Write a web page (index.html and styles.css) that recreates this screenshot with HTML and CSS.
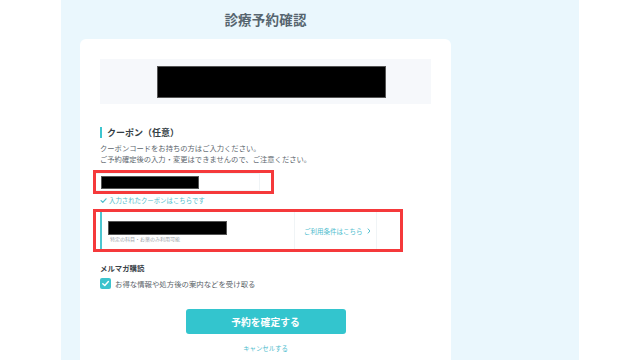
FILE: index.html
```html
<!DOCTYPE html>
<html lang="ja">
<head>
<meta charset="utf-8">
<link rel="stylesheet" href="styles.css">
</head>
<body>
<div class="panel">
  <div class="card-col">
    <h1 class="title">診療予約確認</h1>
    <div class="card">
      <div class="summary"><div class="redact redact-summary"></div></div>

      <div class="section-head">クーポン（任意）</div>
      <p class="desc">クーポンコードをお持ちの方はご入力ください。<br>ご予約確定後の入力・変更はできませんので、ご注意ください。</p>

      <div class="mark mark-input">
        <div class="input"><div class="redact redact-code"></div></div>
      </div>
      <div class="applied"><svg class="tick" viewBox="0 0 10 10"><path d="M1.5 5.2 L4 7.6 L8.6 2.6" fill="none" stroke="currentColor" stroke-width="1.8" stroke-linecap="round" stroke-linejoin="round"/></svg>入力されたクーポンはこちらです</div>

      <div class="mark mark-coupon">
        <div class="coupon">
          <div class="coupon-main">
            <div class="redact redact-coupon"></div>
            <div class="coupon-note">特定の科目・お薬のみ利用可能</div>
          </div>
          <div class="coupon-link">ご利用条件はこちら<svg class="chev" viewBox="0 0 6 10"><path d="M1.5 1.5 L4.5 5 L1.5 8.5" fill="none" stroke="currentColor" stroke-width="1.6" stroke-linecap="round" stroke-linejoin="round"/></svg></div>
        </div>
      </div>

      <div class="mail-head">メルマガ購読</div>
      <label class="check-row"><span class="checkbox"><svg viewBox="0 0 10 10"><path d="M2 5.2 L4.2 7.3 L8.2 2.8" fill="none" stroke="#fff" stroke-width="1.6" stroke-linecap="round" stroke-linejoin="round"/></svg></span>お得な情報や処方後の案内などを受け取る</label>

      <button class="confirm">予約を確定する</button>
      <div class="cancel">キャンセルする</div>
    </div>
  </div>
</div>
</body>
</html>
```
FILE: styles.css
```css
* { box-sizing: border-box; }
html, body { margin: 0; padding: 0; background: #ffffff; }
body {
  width: 640px; height: 360px; overflow: hidden;
  font-family: "Noto Sans CJK JP", "Noto Sans", sans-serif;
}
.panel {
  margin-left: 61px;
  width: 518px;
  height: 360px;
  background: #eaf7fd;
  padding-left: 19px;
}
.card-col { width: 371px; }
.title {
  margin: 0;
  height: 39px;
  line-height: 39px;
  text-align: center;
  font-size: 13.5px;
  font-weight: 700;
  color: #56656f;
  letter-spacing: 0.2px;
}
.card {
  background: #ffffff;
  border-radius: 6px 6px 0 0;
  padding: 20px 20px 0 20px;
  height: 321px;
}
.summary {
  height: 45px;
  background: #f6f8fb;
  padding: 7px 0 0 57px;
}
.redact { background: #000; border: 1px solid #555; }
.redact-summary { width: 229px; height: 32px; }
.section-head {
  margin-top: 23px;
  height: 11px;
  line-height: 11px;
  border-left: 2px solid #3ec5cf;
  padding-left: 5px;
  font-size: 9px;
  font-weight: 700;
  color: #333d44;
}
.desc {
  margin: 5px 0 0 0;
  font-size: 7.3px;
  line-height: 11px;
  color: #5c666d;
}
.mark {
  border: 3px solid #f5393b;
  margin-left: -7px;
}
.mark-input {
  margin-top: 5px;
  width: 181px;
  height: 24px;
}
.input {
  width: 164px;
  height: 18px;
  border: 1px solid #f0f4f6;
  border-left: none;
  padding-left: 5px;
  display: flex;
  align-items: center;
}
.redact-code { width: 98px; height: 13px; }
.applied {
  height: 10px;
  margin-top: 1px;
  display: flex;
  align-items: center;
  font-size: 6.4px;
  color: #4fbccb;
}
.tick { width: 7px; height: 7px; margin-right: 2px; }
.mark-coupon {
  margin-top: 4px;
  width: 310px;
  height: 43px;
}
.coupon {
  margin-left: 4px;
  width: 277px;
  height: 37px;
  border-left: 2px solid #4cc6d0;
  border-right: 1px solid #f0f4f6;
  display: flex;
}
.coupon-main {
  flex: 1;
  padding: 9px 0 0 6px;
}
.redact-coupon { width: 119px; height: 14px; }
.coupon-note {
  margin-top: 1px;
  padding-left: 2px;
  font-size: 5px;
  line-height: 6px;
  color: #9aa2a8;
}
.coupon-link {
  width: 82px;
  border-left: 1px solid #f0f4f6;
  padding-left: 9px;
  display: flex;
  align-items: center;
  font-size: 6.5px;
  color: #4cbccd;
}
.chev { width: 4px; height: 6px; margin-left: 4px; }
.mail-head {
  margin-top: 11px;
  height: 10px;
  line-height: 10px;
  font-size: 7.4px;
  font-weight: 700;
  color: #3a4349;
}
.check-row {
  margin-top: 5px;
  height: 11px;
  display: flex;
  align-items: center;
  font-size: 7.4px;
  color: #5a6369;
}
.checkbox {
  width: 11px; height: 11px;
  border-radius: 2px;
  background: #3dc3cd;
  margin-right: 4px;
  display: flex;
  align-items: center;
  justify-content: center;
}
.checkbox svg { width: 9px; height: 9px; }
.confirm {
  display: block;
  margin: 20px auto 0 auto;
  width: 160px;
  height: 25px;
  border: none;
  border-radius: 3px;
  background: #33c5ce;
  color: #fff;
  font-family: "Noto Sans CJK JP", sans-serif;
  font-size: 9.8px;
  font-weight: 700;
  padding: 0;
}
.cancel {
  margin-top: 10px;
  height: 10px;
  line-height: 10px;
  text-align: center;
  font-size: 6.4px;
  color: #4cbccd;
}
```
